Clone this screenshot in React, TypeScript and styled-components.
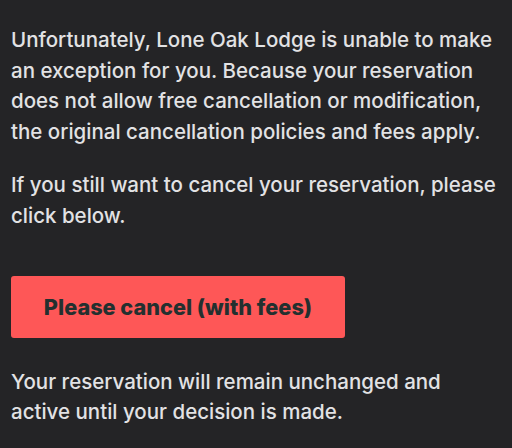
import React from 'react'
import styled, { createGlobalStyle } from 'styled-components'

const GlobalStyle = createGlobalStyle`
    html, body {
        margin: 0;
        padding: 0;
        background: #242426;
    }
    body {
        font-family: Inter, "Noto Sans", sans-serif;
        -webkit-font-smoothing: antialiased;
    }
`

const Page = styled.div`
    width: 512px;
    height: 448px;
    box-sizing: border-box;
    padding: 25px 11px 0 11px;
    background: #242426;
    overflow: hidden;
`

const Paragraph = styled.p<{ $gap?: number }>`
    margin: 0 0 ${props => props.$gap ?? 0}px 0;
    font-size: 20.5px;
    font-weight: 500;
    line-height: 30.5px;
    color: #e2e2e4;
    white-space: nowrap;
`

const CancelButton = styled.button`
    display: block;
    width: 334px;
    height: 62px;
    margin: 0 0 29px 0;
    border: none;
    border-radius: 3px;
    background: #fe5757;
    color: #23302f;
    font-family: Inter, "Noto Sans", sans-serif;
    font-size: 21.7px;
    font-weight: 800;
    cursor: pointer;
`

export default function App() {
    return (
        <>
            <GlobalStyle />
            <Page>
                <Paragraph $gap={23}>
                    Unfortunately, Lone Oak Lodge is unable to make<br />
                    an exception for you. Because your reservation<br />
                    does not allow free cancellation or modification,<br />
                    the original cancellation policies and fees apply.
                </Paragraph>
                <Paragraph $gap={44.5}>
                    If you still want to cancel your reservation, please<br />
                    click below.
                </Paragraph>
                <CancelButton>Please cancel (with fees)</CancelButton>
                <Paragraph>
                    Your reservation will remain unchanged and<br />
                    active until your decision is made.
                </Paragraph>
            </Page>
        </>
    )
}
